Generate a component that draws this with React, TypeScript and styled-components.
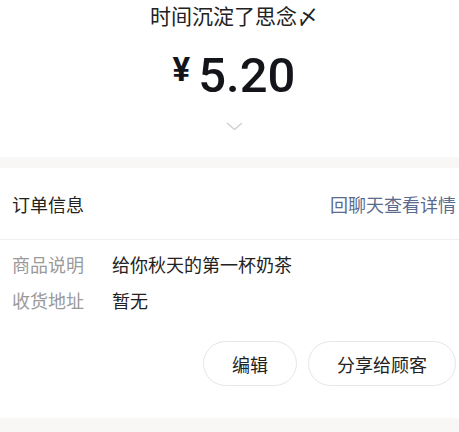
import React from "react";
import styled, { createGlobalStyle } from "styled-components";

const Global = createGlobalStyle`
  html, body { margin: 0; padding: 0; background: #ffffff; overflow: hidden; }
  body { font-family: "Noto Sans CJK SC", "Noto Sans", sans-serif; }
`;

const Page = styled.div`
  width: 468px;
  min-height: 432px;
  background: #ffffff;
  display: flex;
  flex-direction: column;
`;

const Top = styled.section`
  display: flex;
  flex-direction: column;
  align-items: center;
  padding-bottom: 26px;
`;

const Title = styled.div`
  font-size: 21px;
  line-height: 30px;
  color: #222222;
`;

const PriceRow = styled.div`
  margin-top: 21px;
  display: flex;
  align-items: flex-start;
  color: #14151a;
`;

const Currency = styled.span`
  font-family: Roboto, "Liberation Sans", sans-serif;
  font-weight: 700;
  font-size: 33px;
  line-height: 33px;
  margin-top: 2px;
  margin-right: 8px;
`;

const Amount = styled.span`
  font-family: Roboto, "Liberation Sans", sans-serif;
  font-weight: 500;
  font-size: 49px;
  line-height: 49px;
`;

const Chevron = styled.svg`
  margin-top: 22px;
  display: block;
`;

const Band = styled.div<{ $h: number }>`
  height: ${(p) => p.$h}px;
  background: #f9f7f5;
  flex: ${(p) => (p.$h ? "0 0 auto" : "1")};
`;

const Header = styled.div`
  height: 72px;
  box-sizing: border-box;
  border-bottom: 1px solid #efefef;
  display: flex;
  align-items: center;
  justify-content: space-between;
  padding: 0 12px;
  font-size: 18px;
`;

const HeaderTitle = styled.span`
  color: #222222;
`;

const Link = styled.span`
  color: #5a6b8c;
`;

const Rows = styled.div`
  padding: 6px 12px 0;
`;

const Row = styled.div`
  display: flex;
  line-height: 36px;
  font-size: 18px;
`;

const Label = styled.span`
  width: 100px;
  color: #9a9a9a;
`;

const Value = styled.span`
  color: #222222;
`;

const Actions = styled.div`
  margin-top: 23px;
  padding: 0 12px;
  display: flex;
  justify-content: flex-end;
  gap: 11px;
  margin-bottom: 32px;
`;

const Pill = styled.button`
  height: 45px;
  box-sizing: border-box;
  padding: 0 28px;
  border: 1px solid #e6e6e6;
  border-radius: 23px;
  background: #ffffff;
  font-family: "Noto Sans CJK SC", sans-serif;
  font-size: 18px;
  color: #222222;
`;

export default function App() {
  return (
    <>
      <Global />
      <Page>
        <Top>
          <Title>时间沉淀了思念〆</Title>
          <PriceRow>
            <Currency>¥</Currency>
            <Amount>5.20</Amount>
          </PriceRow>
          <Chevron width="17" height="9" viewBox="0 0 17 9">
            <path d="M1 1 L8.5 7.5 L16 1" fill="none" stroke="#d0d0d0" strokeWidth="1.4" />
          </Chevron>
        </Top>
        <Band $h={11} />
        <Header>
          <HeaderTitle>订单信息</HeaderTitle>
          <Link>回聊天查看详情</Link>
        </Header>
        <Rows>
          <Row>
            <Label>商品说明</Label>
            <Value>给你秋天的第一杯奶茶</Value>
          </Row>
          <Row>
            <Label>收货地址</Label>
            <Value>暂无</Value>
          </Row>
        </Rows>
        <Actions>
          <Pill>编辑</Pill>
          <Pill>分享给顾客</Pill>
        </Actions>
        <Band $h={0} />
      </Page>
    </>
  );
}
